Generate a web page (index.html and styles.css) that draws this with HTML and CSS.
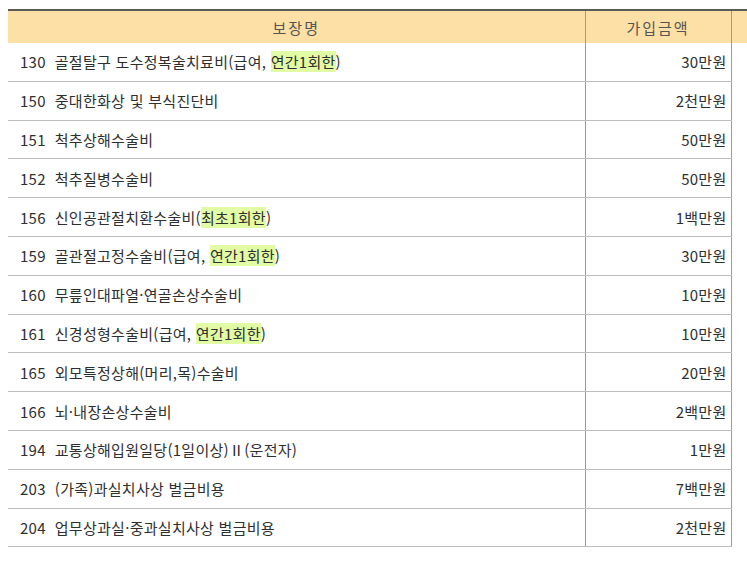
FILE: index.html
```html
<!DOCTYPE html>
<html lang="ko">
<head>
<meta charset="utf-8">
<link rel="stylesheet" href="styles.css">
</head>
<body>
<table class="cov">
  <colgroup><col class="c-name"><col class="c-amt"><col class="c-rest"></colgroup>
  <thead>
    <tr><th class="h-name">보장명</th><th class="h-amt">가입금액</th><th class="h-rest"></th></tr>
  </thead>
  <tbody>
    <tr><td class="name">130&nbsp; 골절탈구 도수정복술치료비(급여, <span class="hl">연간1회한</span>)</td><td class="amt">30만원</td><td></td></tr>
    <tr><td class="name">150&nbsp; 중대한화상 및 부식진단비</td><td class="amt">2천만원</td><td></td></tr>
    <tr><td class="name">151&nbsp; 척추상해수술비</td><td class="amt">50만원</td><td></td></tr>
    <tr><td class="name">152&nbsp; 척추질병수술비</td><td class="amt">50만원</td><td></td></tr>
    <tr><td class="name">156&nbsp; 신인공관절치환수술비(<span class="hl">최초1회한</span>)</td><td class="amt">1백만원</td><td></td></tr>
    <tr><td class="name">159&nbsp; 골관절고정수술비(급여, <span class="hl">연간1회한</span>)</td><td class="amt">30만원</td><td></td></tr>
    <tr><td class="name">160&nbsp; 무릎인대파열·연골손상수술비</td><td class="amt">10만원</td><td></td></tr>
    <tr><td class="name">161&nbsp; 신경성형수술비(급여, <span class="hl">연간1회한</span>)</td><td class="amt">10만원</td><td></td></tr>
    <tr><td class="name">165&nbsp; 외모특정상해(머리,목)수술비</td><td class="amt">20만원</td><td></td></tr>
    <tr><td class="name">166&nbsp; 뇌·내장손상수술비</td><td class="amt">2백만원</td><td></td></tr>
    <tr><td class="name">194&nbsp; 교통상해입원일당(1일이상)Ⅱ(운전자)</td><td class="amt">1만원</td><td></td></tr>
    <tr><td class="name">203&nbsp; (가족)과실치사상 벌금비용</td><td class="amt">7백만원</td><td></td></tr>
    <tr><td class="name">204&nbsp; 업무상과실·중과실치사상 벌금비용</td><td class="amt">2천만원</td><td></td></tr>
  </tbody>
</table>
</body>
</html>
```
FILE: styles.css
```css
html, body {
  margin: 0;
  padding: 0;
  background: #fff;
  overflow: hidden;
}
body {
  padding: 9px 0 0 8px;
  font-family: "Noto Sans CJK KR", "Noto Sans", sans-serif;
  color: #333;
}
.cov {
  border-collapse: collapse;
  table-layout: fixed;
  width: 760px;
  border-top: 2px solid #5a5a5a;
}
.c-name { width: 577px; }
.c-amt { width: 146px; }
.c-rest { width: 37px; }
.cov th {
  background: #fde0a5;
  height: 32px;
  padding: 0;
  font-weight: 400;
  font-size: 15px;
  color: #555;
  letter-spacing: 2px;
  text-align: center;
}
.cov th.h-amt {
  border-left: 1px solid #9a9a9a;
  border-right: 1px solid #9a9a9a;
}
.cov td {
  height: 37.8px;
  padding: 0;
  font-size: 15px;
  letter-spacing: 0.28px;
  border-bottom: 1px solid #bdbdbd;
  white-space: nowrap;
  color: #2f2f2f;
}
.cov td.name {
  padding-left: 12px;
}
.cov td.amt {
  text-align: right;
  padding-right: 4px;
  border-left: 1px solid #9a9a9a;
  border-right: 1px solid #9a9a9a;
}
.cov tbody td:last-child {
  border-bottom: none;
}
.hl {
  background: #e2fca6;
}
```
